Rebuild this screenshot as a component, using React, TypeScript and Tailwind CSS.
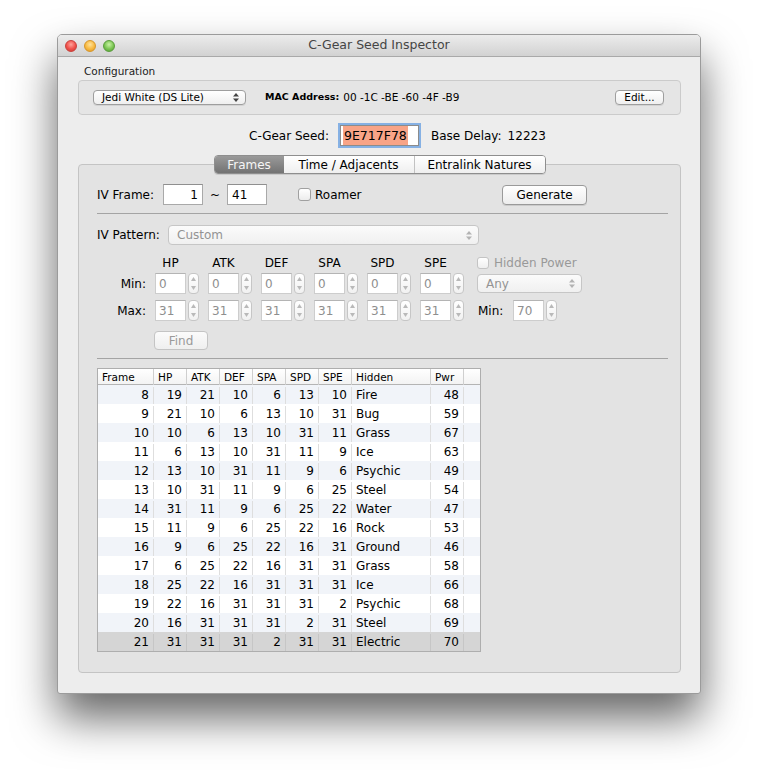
import React from 'react';

const rows: [number, number, number, number, number, number, number, string, number][] = [
  [8, 19, 21, 10, 6, 13, 10, 'Fire', 48],
  [9, 21, 10, 6, 13, 10, 31, 'Bug', 59],
  [10, 10, 6, 13, 10, 31, 11, 'Grass', 67],
  [11, 6, 13, 10, 31, 11, 9, 'Ice', 63],
  [12, 13, 10, 31, 11, 9, 6, 'Psychic', 49],
  [13, 10, 31, 11, 9, 6, 25, 'Steel', 54],
  [14, 31, 11, 9, 6, 25, 22, 'Water', 47],
  [15, 11, 9, 6, 25, 22, 16, 'Rock', 53],
  [16, 9, 6, 25, 22, 16, 31, 'Ground', 46],
  [17, 6, 25, 22, 16, 31, 31, 'Grass', 58],
  [18, 25, 22, 16, 31, 31, 31, 'Ice', 66],
  [19, 22, 16, 31, 31, 31, 2, 'Psychic', 68],
  [20, 16, 31, 31, 31, 2, 31, 'Steel', 69],
  [21, 31, 31, 31, 2, 31, 31, 'Electric', 70],
];

const stats = ['HP', 'ATK', 'DEF', 'SPA', 'SPD', 'SPE'];
const cols = 'grid grid-cols-[56px_33px_33px_33px_33px_33px_33px_79px_33px_1fr]';

const Arrows = ({ color }: { color: string }) => (
  <svg width="6" height="9" viewBox="0 0 6 9">
    <path d="M3 0L6 3.5H0z" fill={color} />
    <path d="M3 9L6 5.5H0z" fill={color} />
  </svg>
);

const Stepper = () => (
  <div className="ml-[2px] flex h-[21px] w-[11px] flex-col items-center justify-between rounded-[4px] border border-[#c6c6c6] bg-gradient-to-b from-white to-[#f1f1f1] py-[3px]">
    <svg width="5" height="4" viewBox="0 0 5 4"><path d="M2.5 0L5 4H0z" fill="#b9b9b9" /></svg>
    <svg width="5" height="4" viewBox="0 0 5 4"><path d="M2.5 4L5 0H0z" fill="#b9b9b9" /></svg>
  </div>
);

const DimField = ({ value, w = 'w-[31px]' }: { value: string; w?: string }) => (
  <div className={`flex h-[21px] ${w} items-center border border-[#cdcdcd] border-t-[#b4b4b4] bg-white pl-[3px] text-[12px] text-[#8e8e8e]`}>
    {value}
  </div>
);

const Checkbox = () => (
  <div className="h-[13px] w-[13px] rounded-[3px] border border-[#a0a0a0] bg-gradient-to-b from-white to-[#ececec]" />
);

const App: React.FC = () => {
  return (
    <div className="h-[773px] w-[758px] bg-white pl-[57px] pt-[34px] font-['DejaVu_Sans',sans-serif] text-black">
      <div className="flex h-[660px] w-[644px] flex-col overflow-hidden rounded-t-[5px] rounded-b-[3px] border border-[#9b9b9b] bg-[#ededed] shadow-[0_24px_44px_rgba(0,0,0,0.6)]">
        {/* title bar */}
        <div className="relative flex h-[22px] items-center border-b border-[#a9a9a9] bg-gradient-to-b from-[#ececec] to-[#d2d2d2]">
          <div className="flex gap-[7px] pl-[7px]">
            <div className="h-[12px] w-[12px] rounded-full border border-[#c9403b] bg-[radial-gradient(circle_at_50%_35%,#ffa39b,#f0504a_55%,#c53a34)]" />
            <div className="h-[12px] w-[12px] rounded-full border border-[#d6962a] bg-[radial-gradient(circle_at_50%_35%,#ffe29a,#f8b93f_55%,#d99428)]" />
            <div className="h-[12px] w-[12px] rounded-full border border-[#5a9c3c] bg-[radial-gradient(circle_at_50%_35%,#c8f2a4,#7ac552_55%,#4f9a34)]" />
          </div>
          <div className="absolute inset-0 flex items-center justify-center text-[12.5px] text-[#454545]">
            C-Gear Seed Inspector
          </div>
        </div>

        {/* body */}
        <div className="flex flex-1 flex-col pb-[20px] pl-[20px] pr-[19px] pt-[7px]">
          <div className="h-[14px] pl-[6px] text-[10.5px] leading-[14px] text-[#222]">Configuration</div>
          <div className="mt-[2px] flex h-[35px] items-center rounded-[4px] border border-[#cbcbcb] bg-[#e5e5e5] pl-[14px] pr-[16px]">
            <div className="flex h-[15px] w-[153px] items-center justify-between rounded-[4px] border border-[#9e9e9e] bg-gradient-to-b from-white to-[#efefef] pl-[8px] pr-[6px] text-[10.5px] shadow-[0_1px_0_rgba(0,0,0,0.08)]">
              <span>Jedi White (DS Lite)</span>
              <Arrows color="#444" />
            </div>
            <span className="ml-[19px] text-[9.5px] font-bold">MAC Address:</span>
            <span className="ml-[4px] text-[10.5px]">00 -1C -BE -60 -4F -B9</span>
            <div className="ml-auto flex h-[15px] w-[49px] items-center justify-center rounded-[4px] border border-[#9e9e9e] bg-gradient-to-b from-white to-[#efefef] text-[10.5px] shadow-[0_1px_0_rgba(0,0,0,0.08)]">
              Edit...
            </div>
          </div>

          {/* seed row */}
          <div className="mt-[8px] flex h-[25px] items-center pl-[171px] text-[12px]">
            <span>C-Gear Seed:</span>
            <div className="ml-[11px] flex h-[21px] w-[79px] items-center border border-[#8c8c8c] bg-white pl-[2px] shadow-[0_0_0_2px_#86b1e4]">
              <span className="bg-[#f8a487] px-[1px] text-[12.5px] leading-[19px]">9E717F78</span>
            </div>
            <span className="ml-[12px]">Base Delay:</span>
            <span className="ml-[6px]">12223</span>
          </div>

          {/* tabs */}
          <div className="relative z-10 mt-[7px] flex h-[19px] justify-center">
            <div className="flex overflow-hidden rounded-[4px] border border-[#8e8e8e] text-[12px] shadow-[0_1px_0_rgba(0,0,0,0.1)]">
              <div className="flex w-[69px] items-center justify-center bg-gradient-to-b from-[#9a9a9a] to-[#737373] text-[#f6f6f6]">Frames</div>
              <div className="flex w-[130px] items-center justify-center bg-gradient-to-b from-white to-[#efefef]">Time / Adjacents</div>
              <div className="flex w-[131px] items-center justify-center border-l border-[#c2c2c2] bg-gradient-to-b from-white to-[#efefef]">Entralink Natures</div>
            </div>
          </div>

          {/* tab box */}
          <div className="-mt-[10px] flex flex-1 flex-col rounded-[4px] border border-[#c4c4c4] bg-[#e3e3e3] pl-[18px] pr-[12px] pt-[19px] text-[12px]">
            <div className="flex h-[21px] items-center">
              <span className="w-[66px]">IV Frame:</span>
              <div className="flex h-[21px] w-[40px] items-center justify-end border border-[#a9a9a9] border-t-[#8f8f8f] bg-white pr-[4px]">1</div>
              <span className="w-[24px] text-center">~</span>
              <div className="flex h-[21px] w-[40px] items-center border border-[#a9a9a9] border-t-[#8f8f8f] bg-white pl-[4px]">41</div>
              <div className="ml-[31px] flex w-[204px] items-center gap-[4px]">
                <Checkbox />
                <span>Roamer</span>
              </div>
              <div className="flex h-[20px] w-[85px] items-center justify-center rounded-[4px] border border-[#9a9a9a] bg-gradient-to-b from-white to-[#ededed] shadow-[0_1px_0_rgba(0,0,0,0.1)]">
                Generate
              </div>
            </div>
            <div className="mt-[8px] border-t border-[#a4a4a4]" />

            <div className="mt-[11px] flex h-[20px] items-center">
              <span className="w-[71px]">IV Pattern:</span>
              <div className="flex h-[20px] w-[311px] items-center justify-between rounded-[4px] border border-[#c6c6c6] bg-gradient-to-b from-[#fbfbfb] to-[#f0f0f0] pl-[8px] pr-[6px] text-[#939393]">
                <span>Custom</span>
                <Arrows color="#b3b3b3" />
              </div>
            </div>

            <div className="mt-[10px] flex h-[16px] items-center">
              <div className="w-[58px]" />
              {stats.map((s) => (
                <div key={s} className="w-[53px]">
                  <div className="w-[31px] text-center">{s}</div>
                </div>
              ))}
              <div className="ml-[4px] flex items-center gap-[5px] text-[#999]">
                <div className="h-[12px] w-[12px] rounded-[3px] border border-[#c4c4c4] bg-gradient-to-b from-white to-[#efefef]" />
                <span>Hidden Power</span>
              </div>
            </div>

            <div className="mt-[2px] flex h-[21px] items-center">
              <span className="w-[58px] pr-[9px] text-right">Min:</span>
              {stats.map((s) => (
                <div key={s} className="flex w-[53px] items-center">
                  <DimField value="0" />
                  <Stepper />
                </div>
              ))}
              <div className="ml-[4px] flex h-[19px] w-[105px] items-center justify-between rounded-[4px] border border-[#c6c6c6] bg-gradient-to-b from-[#fbfbfb] to-[#f0f0f0] pl-[8px] pr-[6px] text-[#939393]">
                <span>Any</span>
                <Arrows color="#b3b3b3" />
              </div>
            </div>

            <div className="mt-[6px] flex h-[21px] items-center">
              <span className="w-[58px] pr-[9px] text-right">Max:</span>
              {stats.map((s) => (
                <div key={s} className="flex w-[53px] items-center">
                  <DimField value="31" />
                  <Stepper />
                </div>
              ))}
              <span className="ml-[5px] w-[35px]">Min:</span>
              <DimField value="70" w="w-[31px]" />
              <Stepper />
            </div>

            <div className="mt-[10px] pl-[57px]">
              <div className="flex h-[19px] w-[54px] items-center justify-center rounded-[4px] border border-[#c4c4c4] bg-gradient-to-b from-[#fbfbfb] to-[#efefef] text-[#9a9a9a]">
                Find
              </div>
            </div>
            <div className="mt-[8px] border-t border-[#a4a4a4]" />

            {/* table */}
            <div className="mt-[9px] w-[384px] border border-[#aeaeae] bg-white">
              <div className={`${cols} h-[16px] border-b border-[#b4b4b4] bg-gradient-to-b from-white to-[#f3f3f3] text-[10.5px] leading-[16px]`}>
                {['Frame', 'HP', 'ATK', 'DEF', 'SPA', 'SPD', 'SPE', 'Hidden', 'Pwr', ''].map((h, i) => (
                  <div key={i} className={`pl-[4px] ${i < 9 ? 'border-r border-[#cfcfcf]' : ''}`}>{h}</div>
                ))}
              </div>
              {rows.map((r, ri) => {
                const sel = ri === rows.length - 1;
                const bg = sel ? 'bg-[#d5d5d5]' : ri % 2 === 0 ? 'bg-[#f1f4f9]' : 'bg-white';
                const line = sel ? 'border-[#c6c6c6]' : 'border-[#dedede]';
                return (
                  <div key={ri} className={`${cols} h-[19px] ${bg} pt-[2px] text-[12px] leading-[17px]`}>
                    {r.slice(0, 7).map((v, ci) => (
                      <div key={ci} className={`border-r ${line} pr-[4px] text-right`}>{v}</div>
                    ))}
                    <div className={`border-r ${line} pl-[4px]`}>{r[7]}</div>
                    <div className={`border-r ${line} pr-[4px] text-right`}>{r[8]}</div>
                    <div />
                  </div>
                );
              })}
            </div>
          </div>
        </div>
      </div>
    </div>
  );
};

export default App;
